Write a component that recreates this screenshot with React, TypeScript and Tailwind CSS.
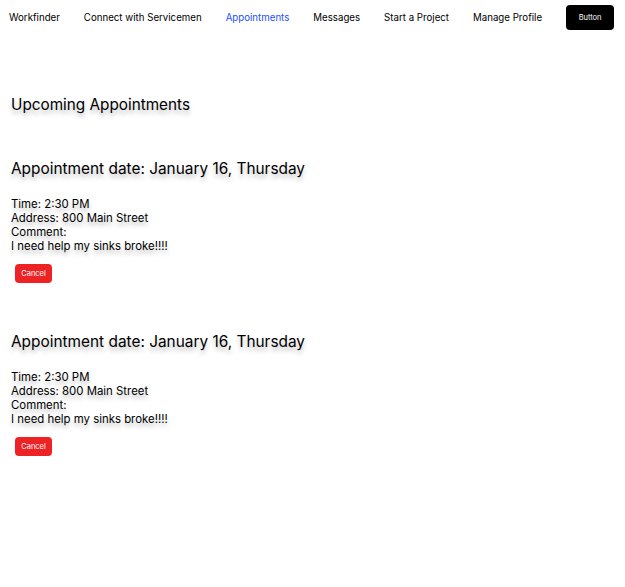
import React from 'react';

const NAV = ['Workfinder', 'Connect with Servicemen', 'Appointments', 'Messages', 'Start a Project', 'Manage Profile'];

const shadow = '[text-shadow:0_4px_4px_rgba(0,0,0,0.25)]';

function AppointmentCard() {
  return (
    <div className="flex flex-col items-start">
      <h2 className={`text-[15.4px] leading-[22px] text-black ${shadow}`}>
        Appointment date: January 16, Thursday
      </h2>
      <div className={`mt-[17px] text-[11.4px] leading-[14px] text-black ${shadow}`}>
        <p>Time: 2:30 PM</p>
        <p>Address: 800 Main Street</p>
        <p>Comment:</p>
        <p>I need help my sinks broke!!!!</p>
      </div>
      <button className="mt-[11px] ml-[4px] h-[19px] w-[37px] rounded-[4px] bg-[#ec2224] text-[7.5px] text-white">
        Cancel
      </button>
    </div>
  );
}

export default function App() {
  return (
    <div className="min-h-screen bg-white font-['Inter',sans-serif] text-black">
      <nav className="flex h-[35px] items-center gap-[24px] whitespace-nowrap pt-[1px] pl-[9px] pr-[11px] text-[9.7px]">
        {NAV.map((item) => (
          <a key={item} className={item === 'Appointments' ? 'text-[#2450ff]' : 'text-black'}>
            {item}
          </a>
        ))}
        <button className="-mt-[1px] h-[25px] w-[48px] shrink-0 rounded-[4px] bg-black text-[7.5px] text-white">
          Button
        </button>
      </nav>

      <main className="px-[11px] pt-[60px]">
        <h1 className={`text-[15.3px] leading-[20px] ${shadow}`}>Upcoming Appointments</h1>
        <div className="mt-[43px] flex flex-col gap-[48px]">
          <AppointmentCard />
          <AppointmentCard />
        </div>
      </main>
    </div>
  );
}
